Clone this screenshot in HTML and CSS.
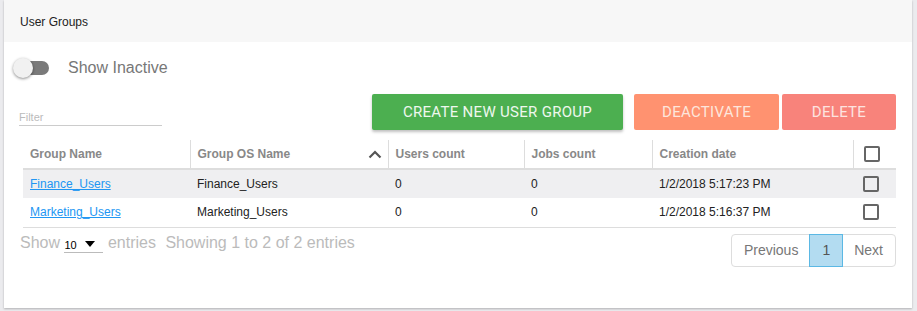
FILE: index.html
```html
<!DOCTYPE html>
<html lang="en">
<head>
    <meta charset="UTF-8">
    <meta name="viewport" content="width=device-width, initial-scale=1.0">
    <title>User Groups</title>
    <link rel="stylesheet" href="styles.css">
</head>
<body>
    <div class="card">
        <div class="card-header">User Groups</div>

        <div class="card-body">
            <!-- toggle -->
            <div class="toggle-row">
                <span class="toggle"><span class="knob"></span></span>
                <span class="toggle-label">Show Inactive</span>
            </div>

            <!-- filter + actions -->
            <div class="toolbar">
                <div class="filter">Filter</div>
                <div class="actions">
                    <button class="btn btn-create">CREATE NEW USER GROUP</button>
                    <button class="btn btn-deactivate">DEACTIVATE</button>
                    <button class="btn btn-delete">DELETE</button>
                </div>
            </div>

            <table class="groups">
                <thead>
                    <tr>
                        <th class="col-name">Group Name</th>
                        <th class="col-os sorted">Group OS Name
                            <svg class="sort" width="14" height="9" viewBox="0 0 14 9"><path d="M1.5 7.5 L7 2 L12.5 7.5" fill="none" stroke="#555" stroke-width="2.2"/></svg>
                        </th>
                        <th class="col-users">Users count</th>
                        <th class="col-jobs">Jobs count</th>
                        <th class="col-date">Creation date</th>
                        <th class="col-check"><span class="check"></span></th>
                    </tr>
                </thead>
                <tbody>
                    <tr class="odd">
                        <td><a href="#">Finance_Users</a></td>
                        <td>Finance_Users</td>
                        <td>0</td>
                        <td>0</td>
                        <td>1/2/2018 5:17:23 PM</td>
                        <td class="col-check"><span class="check"></span></td>
                    </tr>
                    <tr>
                        <td><a href="#">Marketing_Users</a></td>
                        <td>Marketing_Users</td>
                        <td>0</td>
                        <td>0</td>
                        <td>1/2/2018 5:16:37 PM</td>
                        <td class="col-check"><span class="check"></span></td>
                    </tr>
                </tbody>
            </table>

            <div class="table-footer">
                <div class="length">
                    Show
                    <span class="select">10 <span class="caret"></span></span>
                    entries
                    <span class="info">Showing 1 to 2 of 2 entries</span>
                </div>
                <div class="pager">
                    <span class="page">Previous</span>
                    <span class="page active">1</span>
                    <span class="page">Next</span>
                </div>
            </div>
        </div>
    </div>
</body>
</html>
```

FILE: styles.css
```css
body {
    margin: 0;
    background-color: #ebebee;
    font-family: "Liberation Sans", Arial, sans-serif;
    height: 311px;
    overflow: hidden;
}
.card {
    background-color: #fff;
    margin: 0 5px 0 4px;
    height: 308px;
    box-shadow: 0 1px 2px rgba(0, 0, 0, 0.25);
}
.card-header {
    background-color: #f7f7f7;
    height: 42px;
    line-height: 44px;
    padding-left: 16px;
    font-size: 12px;
    color: #222;
}
.card-body {
    padding: 0 16px 0 15px;
}
.toggle-row {
    display: flex;
    align-items: center;
    height: 24px;
    margin-top: 14px;
}
.toggle {
    position: relative;
    display: inline-block;
    width: 35px;
    height: 14px;
    margin-left: -5px;
    border-radius: 7px;
    background-color: #7a7a7a;
}
.knob {
    position: absolute;
    left: -1px;
    top: -3px;
    width: 20px;
    height: 20px;
    border-radius: 50%;
    background-color: #f1f1f1;
    box-shadow: 0 1px 3px rgba(0, 0, 0, 0.45);
}
.toggle-label {
    margin-left: 19px;
    font-size: 16px;
    color: #777;
}
.toolbar {
    display: flex;
    justify-content: space-between;
    align-items: flex-start;
    margin-top: 14px;
    height: 36px;
}
.filter {
    width: 143px;
    margin-top: 17px;
    padding-bottom: 2px;
    border-bottom: 1px solid #ccc;
    font-size: 11px;
    color: #bbb;
}
.actions {
    display: flex;
    gap: 3px;
}
.btn {
    height: 36px;
    border: none;
    border-radius: 2px;
    color: #fff;
    font-family: Roboto, sans-serif;
    font-size: 15px;
    letter-spacing: 0.3px;
    cursor: pointer;
}
.btn-create {
    width: 251px;
    margin-right: 8px;
    background-color: #4caf50;
    color: #eef7ee;
    box-shadow: 0 2px 3px rgba(0, 0, 0, 0.25);
}
.btn-deactivate {
    width: 145px;
    background-color: #ff9270;
    color: #fde6dc;
}
.btn-delete {
    width: 114px;
    background-color: #f8837b;
    color: #fde3e0;
}
.groups {
    width: 873px;
    margin: 10px 0 0 4px;
    border-collapse: collapse;
    table-layout: fixed;
    font-size: 12px;
}
.groups th,
.groups td {
    box-sizing: border-box;
}
.groups th {
    height: 29px;
    padding: 0 7px;
    text-align: left;
    font-weight: bold;
    color: #888;
    border-right: 1px solid #ddd;
    border-bottom: 2px solid #ddd;
}
.groups th:last-child {
    border-right: none;
}
.groups td {
    height: 29px;
    padding: 0 7px;
    color: #222;
}
.groups tbody tr:last-child td {
    border-bottom: 1px solid #ddd;
}
.groups tr.odd td {
    background-color: #efeff1;
}
.groups a {
    color: #2196f3;
}
.col-name { width: 167px; }
.col-os { width: 198px; }
.col-users { width: 136px; }
.col-jobs { width: 128px; }
.col-date { width: 201px; }
.groups .col-check {
    width: 43px;
    padding: 0 0 0 10px;
}
.sorted {
    position: relative;
}
.sort {
    position: absolute;
    right: 6px;
    top: 10px;
}
.check {
    display: block;
    width: 12px;
    height: 12px;
    border: 2px solid #666;
    border-radius: 2px;
}
.table-footer {
    display: flex;
    justify-content: space-between;
    align-items: flex-start;
    margin-top: 6px;
}
.length {
    font-size: 16px;
    color: #bbb;
    margin-left: 1px;
}
.select {
    display: inline-block;
    width: 39px;
    font-size: 11px;
    color: #000;
    border-bottom: 1px solid #bbb;
    line-height: 14px;
    position: relative;
    top: 1px;
}
.caret {
    display: inline-block;
    margin-left: 5px;
    border-left: 5px solid transparent;
    border-right: 5px solid transparent;
    border-top: 6px solid #000;
    vertical-align: 2px;
}
.info {
    margin-left: 5px;
}
.pager {
    display: flex;
    margin-top: 0;
    border: 1px solid #ddd;
    border-radius: 4px;
    font-size: 14px;
    color: #777;
}
.page {
    padding: 0 12px;
    line-height: 31px;
}
.page.active {
    background-color: #b3dcf1;
    outline: 1px solid #5bb8e4;
    color: #555;
}
```
